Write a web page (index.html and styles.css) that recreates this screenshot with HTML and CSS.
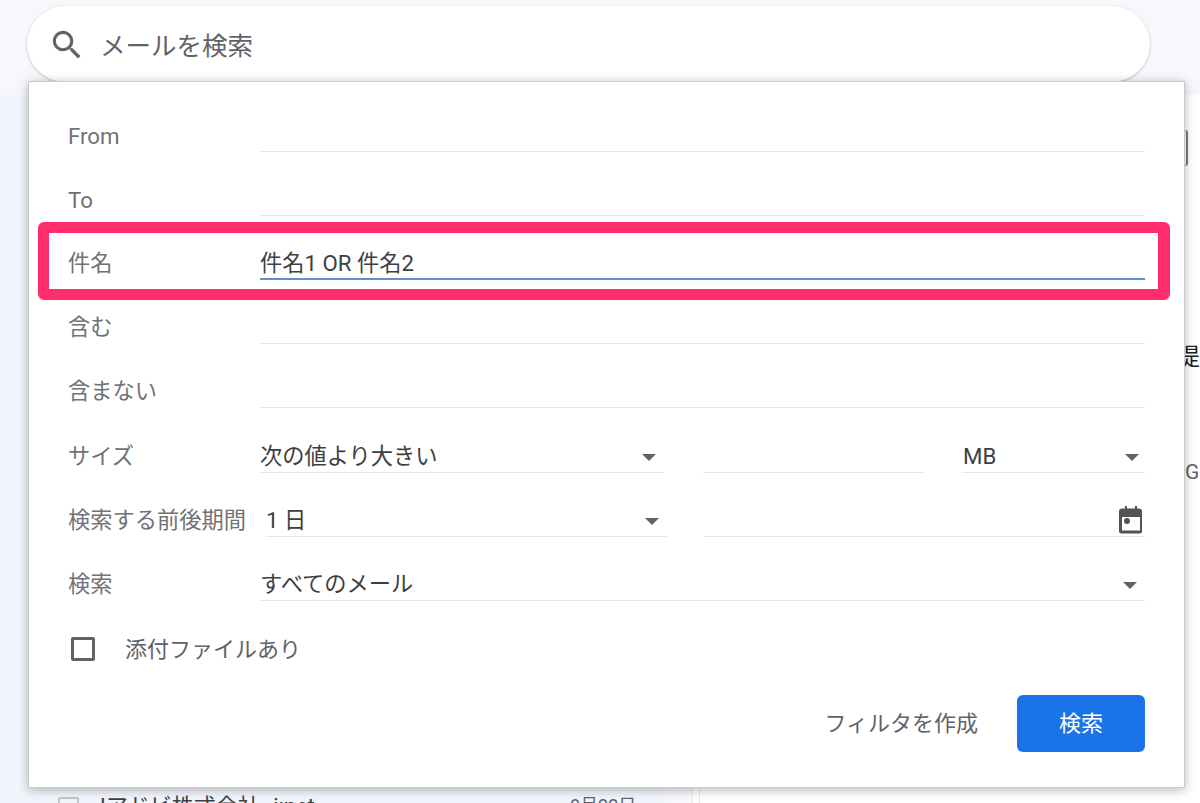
FILE: index.html
```html
<!DOCTYPE html>
<html lang="ja">
<head>
<meta charset="utf-8">
<title>メールを検索</title>
<link rel="stylesheet" href="styles.css">
</head>
<body>
<div class="app">
  <header class="topbar">
    <div class="search">
      <svg class="search-icon" viewBox="0 0 24 24"><path d="M15.5 14h-.79l-.28-.27A6.471 6.471 0 0 0 16 9.5 6.500 6.500 0 1 0 9.500 16c1.610 0 3.090-.59 4.230-1.570l.27.28v.79l5 4.990L20.490 19l-4.990-5zm-6 0C7.010 14 5 11.990 5 9.500S7.010 5 9.500 5 14 7.010 14 9.500 11.990 14 9.500 14z"/></svg>
      <span class="search-text">メールを検索</span>
    </div>
  </header>
  <main class="content">
    <section class="list">
      <div class="mail-row">
        <span class="mail-check"></span>
        <span class="mail-from">!アドビ株式会社 i:net</span>
        <span class="mail-date">8月22日</span>
      </div>
    </section>
    <section class="reading">
      <div class="reading-inner">
        <span class="reading-btn"></span>
        <span class="reading-kanji">提</span>
        <span class="reading-g">G</span>
      </div>
    </section>
  </main>

  <form class="panel">
    <div class="row"><span class="label label-latin">From</span><div class="field"></div></div>
    <div class="row"><span class="label label-latin">To</span><div class="field"></div></div>
    <div class="row"><span class="label">件名</span><div class="field field-active"><span class="value">件名1 OR 件名2</span></div></div>
    <div class="row"><span class="label">含む</span><div class="field"></div></div>
    <div class="row"><span class="label">含まない</span><div class="field"></div></div>
    <div class="row">
      <span class="label">サイズ</span>
      <div class="field field-size1"><span class="value">次の値より大きい</span><i class="arrow"></i></div>
      <div class="field field-size2"></div>
      <div class="field field-size3"><span class="value value-mb">MB</span><i class="arrow arrow-mb"></i></div>
    </div>
    <div class="row">
      <span class="label">検索する前後期間</span>
      <div class="field field-range"><span class="value">1 日</span><i class="arrow"></i></div>
      <div class="field field-date">
        <svg class="calendar" viewBox="0 0 24 28"><path d="M4 2.500h2V0h2v2.500h8V0h2v2.500h2a3 3 0 0 1 3 3V25a2.500 2.500 0 0 1-2.500 2.500H2.500A2.500 2.500 0 0 1 0 25V5.500a3 3 0 0 1 3-3zM3 11v13.500h18V11z"/><circle cx="8" cy="15" r="3"/></svg>
      </div>
    </div>
    <div class="row"><span class="label">検索</span><div class="field"><span class="value">すべてのメール</span><i class="arrow arrow-all"></i></div></div>
    <label class="attach"><span class="checkbox"></span><span class="attach-text">添付ファイルあり</span></label>
    <div class="actions">
      <span class="create-filter">フィルタを作成</span>
      <button class="submit" type="button">検索</button>
    </div>
    <div class="highlight"></div>
  </form>
</div>
</body>
</html>
```
FILE: styles.css
```css
* { box-sizing: border-box; }
html, body { margin: 0; height: 100%; overflow: hidden; }
body {
  font-family: Roboto, "Noto Sans CJK JP", "Liberation Sans", sans-serif;
  background: #f6f8fc;
  color: #3c4043;
}
.app { position: relative; width: 1200px; height: 803px; display: flex; flex-direction: column; overflow: hidden; }

.topbar { height: 95px; flex: none; padding: 6px 50px 0 27px; }
.search {
  height: 76px;
  border-radius: 38px;
  background: #fff;
  display: flex;
  align-items: center;
  padding-left: 21px;
  gap: 14px;
  box-shadow: 0 1px 3px rgba(60, 64, 67, .3);
}
.search-icon { width: 38px; height: 38px; fill: #5f6368; flex: none; margin-top: 1px; }
.search-text { font-size: 25.5px; color: #5f6368; line-height: 1; padding-top: 6px; }

.content { flex: 1; display: flex; min-height: 0; }
.list { width: 665px; flex: none; padding: 702px 0 0 58px; background: #f2f6fc; }
.mail-row { display: flex; align-items: flex-start; font-size: 22px; line-height: 28px; color: #3c4043; }
.mail-check { width: 21px; height: 21px; border: 2px solid #c4c7c9; border-radius: 2px; flex: none; }
.mail-from { margin-left: 21px; width: 470px; flex: none; white-space: nowrap; margin-top: -4px; word-spacing: 8px; }
.mail-date { font-size: 18px; color: #5f6368; white-space: nowrap; margin-top: -5px; }

.reading {
  flex: 1;
  margin-left: 27px;
  padding-left: 6px;
  border-left: 1px solid #e8e8e8;
  display: flex;
  background: #fff;
}
.reading-inner {
  flex: 1;
  border-left: 1px solid #e8e8e8;
  display: flex;
  flex-direction: column;
  align-items: flex-start;
}
.reading-btn { width: 488px; height: 36px; margin-top: 35px; border-right: 2px solid #77797c; border-radius: 0 3px 3px 0; flex: none; }
.reading-kanji { margin: 177px 0 0 476px; font-size: 24px; line-height: 28px; color: #202124; }
.reading-g { margin: 87px 0 0 485px; font-size: 21px; line-height: 28px; color: #5f6368; }

.panel {
  position: absolute;
  left: 28px;
  top: 81px;
  width: 1157px;
  height: 707px;
  background: #fff;
  border: 1px solid #c9c9c9;
  box-shadow: 0 2px 10px rgba(0, 0, 0, .28);
  padding: 6px 39px 0;
}
.row { display: flex; align-items: flex-end; height: 64.1px; }
.label { width: 192px; flex: none; font-size: 22.25px; line-height: 30px; color: #6f7276; white-space: nowrap; padding-bottom: 2px; }
.label-latin { padding-bottom: 1px; }
.field {
  flex: 1;
  position: relative;
  height: 36px;
  border-bottom: 1px solid #e6e6e6;
  display: flex;
  align-items: center;
  min-width: 0;
}
.field-active { border-bottom: 2px solid #5b92cf; }
.value { font-size: 22.25px; color: #3c4043; white-space: nowrap; }
.field-size1 { flex: none; width: 404px; }
.field-size2 { flex: none; width: 221px; margin-left: 39px; }
.field-size3 { flex: none; width: 183px; margin-left: 38px; }
.value-mb { padding: 3px 0 0 1px; }
.field-range { flex: none; width: 401px; margin-left: 6px; }
.field-date { flex: none; width: 440px; margin-left: 38px; }
.arrow {
  position: absolute;
  right: 8px;
  top: 17px;
  width: 0;
  height: 0;
  border-left: 7px solid transparent;
  border-right: 7px solid transparent;
  border-top: 7px solid #5f6368;
}
.arrow-mb { right: 6px; }
.arrow-all { right: 8px; }
.calendar { position: absolute; right: 2px; top: 5px; width: 24px; height: 28px; fill: #515457; }

.attach { display: flex; align-items: center; height: 48px; margin: 24px 0 0 3px; }
.checkbox { width: 24px; height: 24px; border: 3px solid #5f6368; border-radius: 2px; flex: none; }
.attach-text { margin-left: 30px; font-size: 22px; color: #5f6368; white-space: nowrap; padding-bottom: 4px; }

.actions { display: flex; justify-content: flex-end; align-items: center; gap: 39px; margin-top: 22px; }
.create-filter { font-size: 22px; color: #5f6368; white-space: nowrap; padding-bottom: 5px; }
.submit {
  width: 128px;
  height: 57px;
  padding: 0 0 5px;
  background: #1a73e8;
  color: #fff;
  border: 0;
  border-radius: 6px;
  font: inherit;
  font-size: 22px;
}
.highlight {
  position: absolute;
  left: 9px;
  top: 140px;
  width: 1132px;
  height: 78px;
  border-style: solid;
  border-width: 11px 12px 11px 11px;
  border-color: #ff2d6b;
  border-radius: 6px;
  pointer-events: none;
}
```
